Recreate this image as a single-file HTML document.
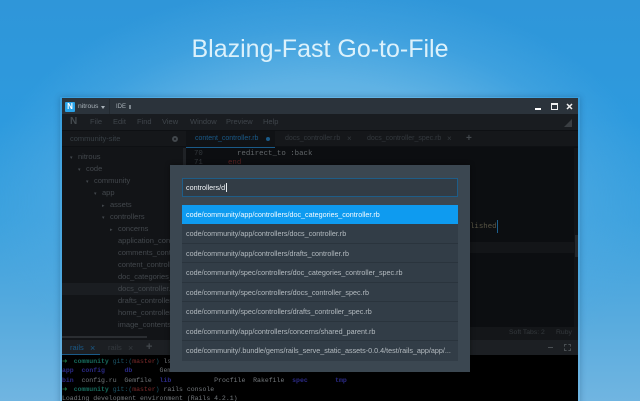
<!DOCTYPE html>
<html><head><meta charset="utf-8"><style>
*{margin:0;padding:0;box-sizing:border-box}
html,body{width:640px;height:401px;overflow:hidden}
body{position:relative;font-family:"Liberation Sans",sans-serif;background:radial-gradient(ellipse 340px 215px at 320px 200px,#7fc2ea 0%,#5fb2e4 55%,rgba(80,170,226,.45) 80%,rgba(60,160,222,0) 100%),linear-gradient(#2f96d9 0%,#2d9ade 30%,#3ba1de 55%,#58abde 80%,#70b5e1 100%);}
div,span.a{position:absolute;white-space:pre}
.t{line-height:12px;font-size:7.5px;color:#43484d}
.t span{display:inline-block;width:8px;font-size:5px;padding-left:0}
.m{font-size:7.5px;color:#3f454b;top:116px;line-height:12px}
.b{font-size:7px;color:#1d2b36;top:133px;line-height:12px}
.r{left:182px;width:276px;height:19.5px;background:#323d47;border-bottom:1px solid #2a343d;color:#b4bbc0;font-size:7.2px;line-height:19px;padding-left:4px;overflow:hidden}
pre{position:absolute;left:62px;font:6.5px/9.3px "Liberation Mono",monospace;color:#74797d}
.ar{display:inline-block;width:1ch;color:#1f7a45}
.g{color:#176a5c;font-weight:bold}.u{color:#1c5568}.e{color:#7a2a2a}.p{color:#2b2a85;font-weight:bold}
.c{font:7.4px/12px 'Liberation Mono',monospace}
</style></head><body>
<div style="left:0;top:32px;width:640px;text-align:center;font-size:25px;line-height:34px;color:#dcf1fb">Blazing-Fast Go-to-File</div>

<div style="left:60px;top:97px;width:520px;height:310px;box-shadow:0 0 6px rgba(10,50,90,.3)"></div>
<div style="left:61.5px;top:98px;width:516.5px;height:303px;background:#0c0e11;overflow:hidden"></div>
<!-- title bar -->
<div style="left:61.5px;top:98px;width:516.5px;height:16px;background:#2b333b"></div>
<div style="left:65px;top:102px;width:10px;height:10px;background:#2aa3e8;border-radius:1px;color:#fff;font-size:8px;line-height:10px;text-align:center;font-weight:bold">N</div>
<div style="left:78px;top:100px;font-size:6.8px;line-height:14px;color:#aab3ba">nitrous</div>
<div style="left:101px;top:106px;border:2.5px solid transparent;border-top:3px solid #aab3ba"></div>
<div style="left:109px;top:99px;width:1px;height:15px;background:#232a30"></div>
<div style="left:116px;top:100px;font-size:6px;line-height:14px;color:#aab3ba">IDE</div>
<div style="left:129px;top:105px;width:2px;height:4px;background:#7d868d"></div>
<div style="left:535px;top:108px;width:6px;height:1.5px;background:#fff"></div>
<div style="left:551px;top:103px;width:7px;height:7px;border:1.5px solid #eee;border-top-width:2px"></div>
<svg style="position:absolute;left:566px;top:103px" width="7" height="7"><path d="M1 1L6 6M6 1L1 6" stroke="#eee" stroke-width="1.5"/></svg>
<!-- menu bar -->
<div style="left:61.5px;top:114px;width:516.5px;height:17px;background:#191c20;border-bottom:1px solid #0e1013"></div>
<div style="left:70px;top:116px;font-size:10px;line-height:12px;font-weight:bold;color:#454b50">N</div>
<div class="m" style="left:90px">File</div><div class="m" style="left:113px">Edit</div><div class="m" style="left:137px">Find</div><div class="m" style="left:162px">View</div><div class="m" style="left:190px">Window</div><div class="m" style="left:226px">Preview</div><div class="m" style="left:263px">Help</div>
<svg style="position:absolute;left:564px;top:119px" width="8" height="8"><path d="M8 0V8H0Z" fill="#3a3e42"/></svg>
<!-- sidebar -->
<div style="left:61.5px;top:131px;width:124.5px;height:209px;background:#121417"></div>
<div style="left:61.5px;top:131px;width:124.5px;height:16px;background:#15171a;border-bottom:1px solid #0e1013"></div>
<div style="left:70px;top:133px;font-size:7.5px;line-height:12px;color:#394046">community-site</div>
<div style="left:172px;top:136px;width:6px;height:6px;border:2px solid #42474c;border-radius:50%"></div>
<div style="left:183px;top:148px;width:3px;height:32px;background:#1f2226"></div>
<div style="left:61.5px;top:283px;width:124.5px;height:12px;background:#1a1d21"></div>
<div class="t" style="left:70px;top:151px"><span>▾</span>nitrous</div>
<div class="t" style="left:78px;top:163px"><span>▾</span>code</div>
<div class="t" style="left:86px;top:175px"><span>▾</span>community</div>
<div class="t" style="left:94px;top:187px"><span>▾</span>app</div>
<div class="t" style="left:102px;top:199px"><span>▸</span>assets</div>
<div class="t" style="left:102px;top:211px"><span>▾</span>controllers</div>
<div class="t" style="left:110px;top:223px"><span>▸</span>concerns</div>
<div class="t" style="left:118px;top:235px">application_controller.rb</div>
<div class="t" style="left:118px;top:247px">comments_controller.rb</div>
<div class="t" style="left:118px;top:259px">content_controller.rb</div>
<div class="t" style="left:118px;top:271px">doc_categories_controller.rb</div>
<div class="t" style="left:118px;top:283px">docs_controller.rb</div>
<div class="t" style="left:118px;top:295px">drafts_controller.rb</div>
<div class="t" style="left:118px;top:307px">home_controller.rb</div>
<div class="t" style="left:118px;top:319px">image_contents_controller.rb</div>
<div style="left:61.5px;top:336px;width:85.5px;height:2px;background:#2a2d31"></div>
<!-- tabs -->
<div style="left:186px;top:131px;width:392px;height:16px;background:#15171a;border-bottom:1px solid #0e1013"></div>
<div style="left:186px;top:131px;width:89px;height:17px;background:#101215;border-bottom:1px solid #1a5a88"></div>
<div class="b" style="left:195px;color:#1a5a88">content_controller.rb</div>
<div style="left:266px;top:137px;width:4px;height:4px;border-radius:50%;background:#1a5a88"></div>
<div class="b" style="left:285px;color:#34393e">docs_controller.rb</div><div class="b" style="left:347px;color:#34393e;font-size:8px">×</div>
<div class="b" style="left:367px;color:#34393e">docs_controller_spec.rb</div><div class="b" style="left:447px;color:#34393e;font-size:8px">×</div>
<div class="b" style="left:466px;color:#43484d;font-size:10px;font-weight:bold">+</div>
<!-- editor -->
<div style="left:186px;top:148px;width:392px;height:179px;background:#0c0e11"></div>
<div style="left:186px;top:242px;width:389px;height:11px;background:#131518"></div>
<div style="left:574px;top:148px;width:4px;height:179px;background:#121417"></div>
<div style="left:575px;top:235px;width:3px;height:22px;background:#24282c"></div>
<div class="c" style="left:194px;top:148px;color:#33383c">70</div>
<div class="c" style="left:237px;top:148px;color:#62676a">redirect_to :back</div>
<div class="c" style="left:194px;top:157px;color:#33383c">71</div>
<div class="c" style="left:228px;top:157px;color:#5a2222">end</div>
<div style="left:470px;top:222px;font:7.4px/11px 'Liberation Mono',monospace;color:#5a5646">lished</div>
<div style="left:497px;top:220px;width:1px;height:13px;background:#1d5f8e"></div>
<!-- status -->
<div style="left:186px;top:327px;width:392px;height:13px;background:#141619"></div>
<div style="left:509px;top:326px;font-size:6.8px;line-height:13px;color:#34393d">Soft Tabs: 2</div>
<div style="left:556px;top:326px;font-size:6.8px;line-height:13px;color:#34393d">Ruby</div>
<!-- terminal tabs -->
<div style="left:61.5px;top:340px;width:516.5px;height:15px;background:#1c1f23"></div>
<div style="left:61.5px;top:354px;width:38.5px;height:1px;background:#1a5a88"></div>
<div style="left:70px;top:342px;font-size:7.5px;line-height:12px;color:#1a5a88">rails</div>
<div style="left:90px;top:342px;font-size:9px;line-height:12px;color:#1a5a88">×</div>
<div style="left:108px;top:342px;font-size:7.5px;line-height:12px;color:#34393e">rails</div>
<div style="left:128px;top:342px;font-size:9px;line-height:12px;color:#34393e">×</div>
<div style="left:146px;top:340px;font-size:11px;line-height:14px;font-weight:bold;color:#43484d">+</div>
<div style="left:548px;top:347px;width:5px;height:1px;background:#4a4f53"></div>
<div style="left:564px;top:344px;width:7px;height:7px;border:1px dashed #4a4f53"></div>
<div style="left:61.5px;top:355px;width:516.5px;height:46px;background:#000"></div>
<pre style="top:357px"><span class="ar">➜</span>  <span class="g">community</span> <span class="u">git:(</span><span class="e">master</span><span class="u">)</span> ls
<span class="p">app</span>  <span class="p">config</span>     <span class="p">db</span>       Gemfile.lock
<span class="p">bin</span>  config.ru  Gemfile  <span class="p">lib</span>           Procfile  Rakefile  <span class="p">spec</span>       <span class="p">tmp</span>
<span class="ar">➜</span>  <span class="g">community</span> <span class="u">git:(</span><span class="e">master</span><span class="u">)</span> rails console
Loading development environment (Rails 4.2.1)</pre>
<!-- modal -->
<div style="left:170px;top:165px;width:300px;height:207px;background:#3b4751;box-shadow:0 0 5px rgba(0,0,0,.4)"></div>
<div style="left:182px;top:177.5px;width:276px;height:19.5px;background:#323c45;border:1px solid #1e5d88;color:#f2f5f7;font-size:7.2px;line-height:17px;padding-left:3px">controllers/d<span style="border-left:1px solid #e8edf0;margin-left:.5px"></span></div>
<div class="r" style="top:204.5px;background:#0e9bf0;color:#f5fbff;border:0;height:19.5px">code/community/app/controllers/doc_categories_controller.rb</div>
<div class="r" style="top:224px">code/community/app/controllers/docs_controller.rb</div>
<div class="r" style="top:243.5px">code/community/app/controllers/drafts_controller.rb</div>
<div class="r" style="top:263px">code/community/spec/controllers/doc_categories_controller_spec.rb</div>
<div class="r" style="top:282.5px">code/community/spec/controllers/docs_controller_spec.rb</div>
<div class="r" style="top:302px">code/community/spec/controllers/drafts_controller_spec.rb</div>
<div class="r" style="top:321.5px">code/community/app/controllers/concerns/shared_parent.rb</div>
<div class="r" style="top:341px;border:0">code/community/.bundle/gems/rails_serve_static_assets-0.0.4/test/rails_app/app/...</div>
</body></html>
